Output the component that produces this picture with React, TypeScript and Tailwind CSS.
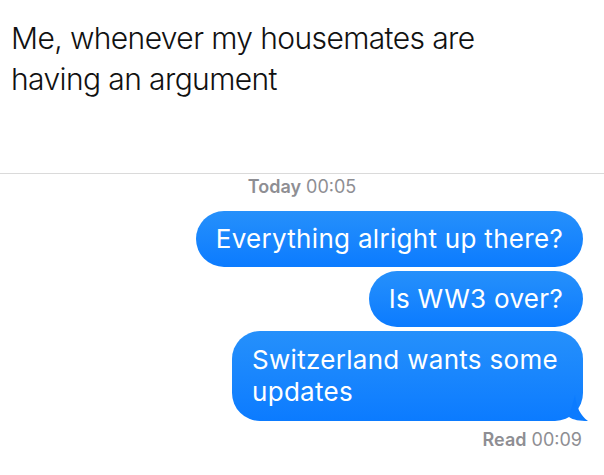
export default function App() {
  const bubble =
    "relative rounded-[28px] bg-gradient-to-b from-[#2590fb] to-[#0b7bff] px-5 text-[26px] leading-[32px] tracking-[0.3px] text-white";

  return (
    <div className="h-[475px] w-[604px] overflow-hidden bg-white font-['Inter','Liberation_Sans',sans-serif]">
      {/* Caption */}
      <div className="px-[11px] pt-[18px] text-[30px] font-light leading-[41px] tracking-[-0.6px] text-[#111]">
        Me, whenever my housemates are
        <br />
        having an argument
      </div>

      <div className="mt-[73px] h-px w-full bg-[#dadada]" />

      {/* Timestamp */}
      <div className="mt-[3px] text-center text-[18px] leading-5 text-[#8e8e93]">
        <span className="font-semibold">Today</span> 00:05
      </div>

      {/* Messages */}
      <div className="mt-[14px] flex flex-col items-end gap-1 pr-[21px]">
        <div className={`${bubble} py-3`}>Everything alright up there?</div>
        <div className={`${bubble} py-3`}>Is WW3 over?</div>
        <div className={`${bubble} w-[351px] py-[13px]`}>
          Switzerland wants some updates
          <svg
            className="absolute -right-[10px] bottom-0"
            width="24"
            height="26"
            viewBox="0 0 24 26"
          >
            <path d="M6 0 C 7 12 12 21 19 26 C 11 26 4 25 0 22 Z" fill="#0b7bff" />
          </svg>
        </div>
      </div>

      <div className="mt-[9px] pr-[22px] text-right text-[18px] leading-5 text-[#8e8e93]">
        <span className="font-semibold">Read</span> 00:09
      </div>
    </div>
  );
}
